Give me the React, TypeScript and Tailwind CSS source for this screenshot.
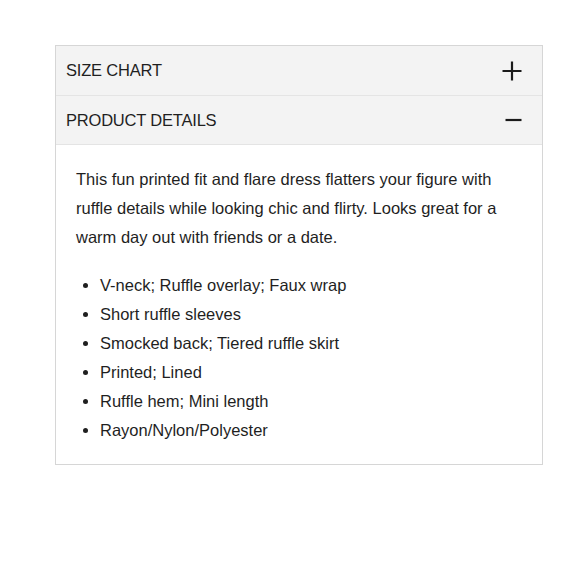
import { useState } from 'react';

// 折叠面板条目
interface AccordionItem {
  id: string;
  title: string;
}

const ITEMS: AccordionItem[] = [
  { id: 'size', title: 'SIZE CHART' },
  { id: 'details', title: 'PRODUCT DETAILS' },
];

const FEATURES = [
  'V-neck; Ruffle overlay; Faux wrap',
  'Short ruffle sleeves',
  'Smocked back; Tiered ruffle skirt',
  'Printed; Lined',
  'Ruffle hem; Mini length',
  'Rayon/Nylon/Polyester',
];

function PlusIcon() {
  return (
    <svg width="20" height="20" viewBox="0 0 20 20" fill="none">
      <path d="M10 0.5v19M0.5 10h19" stroke="#1a1a1a" strokeWidth="2.2" />
    </svg>
  );
}

function MinusIcon() {
  return (
    <svg width="20" height="20" viewBox="0 0 20 20" fill="none">
      <path d="M3.5 10h16" stroke="#1a1a1a" strokeWidth="2.2" />
    </svg>
  );
}

export default function App() {
  const [open, setOpen] = useState('details');

  return (
    <div className="w-[580px] h-[580px] bg-white pt-[45px] pl-[55px] font-['Liberation_Sans',Arial,sans-serif] text-[#222]">
      <div className="w-[488px] border border-[#d6d6d6]">
        {ITEMS.map((item, index) => {
          const isOpen = open === item.id;
          return (
            <div key={item.id}>
              <button
                type="button"
                onClick={() => setOpen(isOpen ? '' : item.id)}
                className={`w-full flex items-center justify-between bg-[#f3f3f3] pl-[10px] pr-[20px] text-left ${index > 0 ? 'h-[50px] border-t border-[#d6d6d6]' : 'h-[49px]'} ${isOpen ? 'border-b border-[#e4e4e4]' : ''}`}
              >
                <span className="text-[16.5px] tracking-[-0.2px] text-[#1f1f1f]">{item.title}</span>
                {isOpen ? <MinusIcon /> : <PlusIcon />}
              </button>

              {isOpen && item.id === 'details' && (
                <div className="px-[20px] pt-[20px] pb-[19px] text-[16.5px] leading-[29px] text-[#1f1f1f]">
                  <p>
                    This fun printed fit and flare dress flatters your figure with ruffle details while looking chic
                    and flirty. Looks great for a warm day out with friends or a date.
                  </p>
                  <ul className="mt-[19px] list-disc pl-[24px]">
                    {FEATURES.map((f) => (
                      <li key={f}>{f}</li>
                    ))}
                  </ul>
                </div>
              )}
            </div>
          );
        })}
      </div>
    </div>
  );
}
